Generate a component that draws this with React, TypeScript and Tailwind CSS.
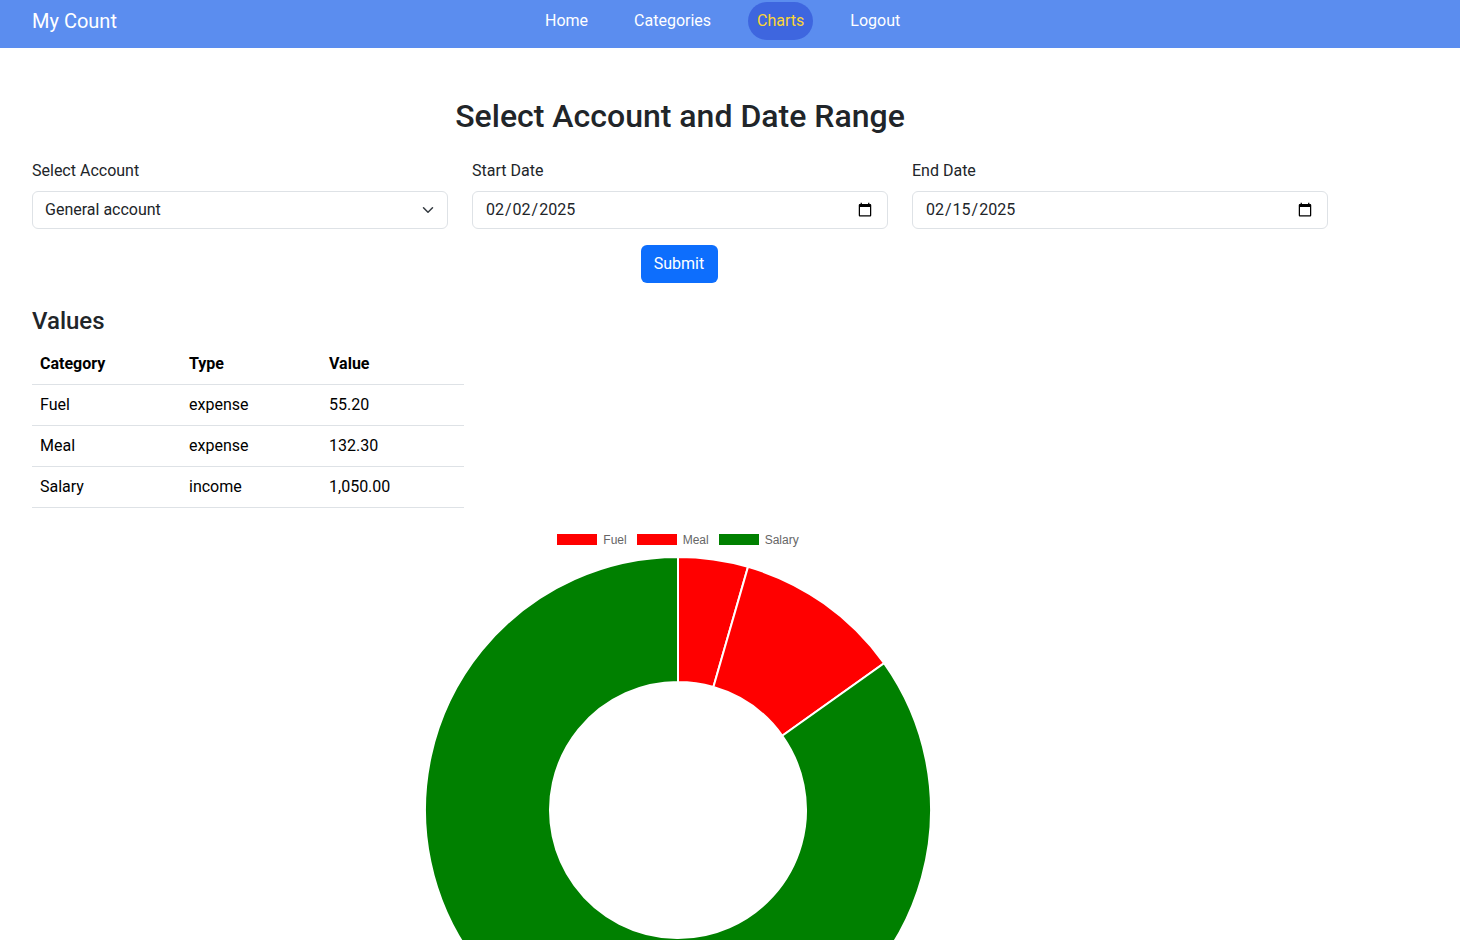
import React, { useState } from 'react'

const rows = [
  { category: 'Fuel', type: 'expense', value: 55.2, color: '#ff0000' },
  { category: 'Meal', type: 'expense', value: 132.3, color: '#ff0000' },
  { category: 'Salary', type: 'income', value: 1050, color: '#008000' },
]

const fmt = (n: number) =>
  n.toLocaleString('en-US', { minimumFractionDigits: 2, maximumFractionDigits: 2 })

// donut slice path, angles in degrees clockwise from 12 o'clock
const slice = (cx: number, cy: number, r0: number, r1: number, a0: number, a1: number) => {
  const p = (a: number, r: number) => {
    const rad = (a * Math.PI) / 180
    return `${cx + r * Math.sin(rad)} ${cy - r * Math.cos(rad)}`
  }
  const large = a1 - a0 > 180 ? 1 : 0
  return `M ${p(a0, r1)} A ${r1} ${r1} 0 ${large} 1 ${p(a1, r1)} L ${p(a1, r0)} A ${r0} ${r0} 0 ${large} 0 ${p(a0, r0)} Z`
}

const Donut = () => {
  const total = rows.reduce((s, r) => s + r.value, 0)
  let start = 0
  return (
    <svg width="508" height="508" viewBox="0 0 508 508">
      {rows.map((r) => {
        const end = start + (r.value / total) * 360
        const d = slice(254, 254, 128, 253, start, end)
        start = end
        return <path key={r.category} d={d} fill={r.color} stroke="#ffffff" strokeWidth={2} />
      })}
    </svg>
  )
}

const App = () => {
  const [account, setAccount] = useState('general')
  const [startDate, setStartDate] = useState('2025-02-02')
  const [endDate, setEndDate] = useState('2025-02-15')
  const links = ['Home', 'Categories', 'Charts', 'Logout']

  return (
    <div className="min-h-screen bg-white text-[#212529] font-['Roboto',sans-serif]">
      {/* Navbar */}
      <nav className="h-12 bg-[#5b8def] flex items-start pt-[2px] px-8">
        <div className="w-[504px] h-[38px] flex items-center">
          <span className="text-white text-[20px] leading-none">My Count</span>
        </div>
        <div className="flex gap-[28px]">
          {links.map((l) => (
            <a
              key={l}
              href="#"
              className={`h-[38px] px-[9px] flex items-center text-base rounded-full ${
                l === 'Charts' ? 'bg-[#3e66df] text-[#fcd535]' : 'text-white'
              }`}
            >
              {l}
            </a>
          ))}
        </div>
      </nav>

      <main className="px-8 w-[1360px]">
        <h2 className="text-center text-[32px] font-medium leading-[1.2] mt-[49px] mb-2">
          Select Account and Date Range
        </h2>

        <div className="grid grid-cols-3 gap-6 mt-6 w-[1296px]">
          <div>
            <label className="block mb-2 leading-6">Select Account</label>
            <div className="relative">
              <select
                value={account}
                onChange={(e) => setAccount(e.target.value)}
                className="w-full h-[38px] appearance-none border border-[#dee2e6] rounded-[6px] pl-3 pr-9 bg-white text-base"
              >
                <option value="general">General account</option>
              </select>
              <svg className="absolute right-[14px] top-[13px] pointer-events-none" width="12" height="12" viewBox="0 0 16 16">
                <path d="m2 5 6 6 6-6" fill="none" stroke="#343a40" strokeWidth="2" strokeLinecap="round" strokeLinejoin="round" />
              </svg>
            </div>
          </div>
          <div>
            <label className="block mb-2 leading-6">Start Date</label>
            <input
              type="date"
              value={startDate}
              onChange={(e) => setStartDate(e.target.value)}
              className="w-full h-[38px] border border-[#dee2e6] rounded-[6px] px-3 text-base"
            />
          </div>
          <div>
            <label className="block mb-2 leading-6">End Date</label>
            <input
              type="date"
              value={endDate}
              onChange={(e) => setEndDate(e.target.value)}
              className="w-full h-[38px] border border-[#dee2e6] rounded-[6px] px-3 text-base"
            />
          </div>
        </div>

        <div className="flex justify-center mt-4 w-[1296px]">
          <button className="h-[38px] w-[77px] ml-[-2px] bg-[#0d6efd] text-white rounded-[6px] text-base">Submit</button>
        </div>

        <h4 className="text-2xl font-medium leading-[1.2] mt-6 mb-2">Values</h4>
        <table className="w-[432px] text-left border-collapse">
          <thead>
            <tr className="border-b border-[#dee2e6]">
              <th className="px-2 py-2 font-bold text-black w-[149px]">Category</th>
              <th className="px-2 py-2 font-bold text-black w-[140px]">Type</th>
              <th className="px-2 py-2 font-bold text-black">Value</th>
            </tr>
          </thead>
          <tbody>
            {rows.map((r) => (
              <tr key={r.category} className="border-b border-[#dee2e6]">
                <td className="px-2 py-2 text-black">{r.category}</td>
                <td className="px-2 py-2 text-black">{r.type}</td>
                <td className="px-2 py-2 text-black">{fmt(r.value)}</td>
              </tr>
            ))}
          </tbody>
        </table>

        {/* Chart */}
        <div className="w-[508px] ml-[392px] mt-6">
          <div className="h-[15px] flex justify-center items-center gap-[10px] font-['Liberation_Sans',Arial,sans-serif] text-xs text-[#666666]">
            {rows.map((r) => (
              <div key={r.category} className="flex items-center">
                <span className="w-[40px] h-[11px]" style={{ backgroundColor: r.color }}></span>
                <span className="ml-[6px]">{r.category}</span>
              </div>
            ))}
          </div>
          <div className="mt-[9px]">
            <Donut />
          </div>
        </div>
      </main>
    </div>
  )
}

export default App
